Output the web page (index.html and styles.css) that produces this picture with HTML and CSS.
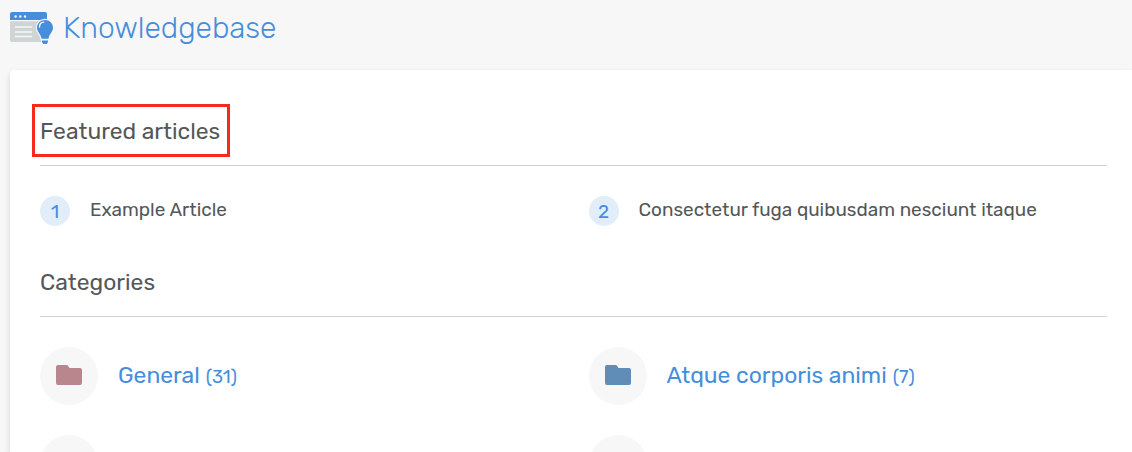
FILE: index.html
```
<!DOCTYPE html>
<html lang="en">
<head>
<meta charset="utf-8">
<title>Knowledgebase</title>
<link rel="stylesheet" href="styles.css">
</head>
<body>
<header class="page-header">
  <svg class="logo" width="44" height="34" viewBox="0 0 44 34">
    <path d="M0 9.200h37V28a2 2 0 0 1-2 2H2a2 2 0 0 1-2-2z" fill="#cfd4d5"/>
    <path d="M0 8V2a2 2 0 0 1 2-2h33a2 2 0 0 1 2 2v6z" fill="#468edb"/>
    <g fill="#f7f7f7"><circle cx="5.600" cy="4.500" r="1.200"/><circle cx="10.300" cy="4.500" r="1.200"/><circle cx="15" cy="4.500" r="1.200"/></g>
    <path d="M5.500 15h16M5.500 20h16M5.500 24.500h16" stroke="#f7f7f7" stroke-width="1.700" stroke-linecap="round"/>
    <path d="M35 8c-4.500 0-8 3.500-8 7.700 0 4.300 3.900 6 4.500 11h7c.6-5 4.500-6.700 4.500-11C43 11.500 39.500 8 35 8z" fill="#468edb" stroke="#f7f7f7" stroke-width="2.400" paint-order="stroke"/>
    <path d="M31 27h8v5h-8z" fill="#f7f7f7"/>
    <path d="M32 28.500h6v1.500l-1.200 2h-3.600L32 30z" fill="#468edb"/>
    <path d="M29.500 15c0-2.800 1.800-4.700 4.300-4.900" fill="none" stroke="#f7f7f7" stroke-width="1.400" stroke-linecap="round"/>
  </svg>
  <h1 class="page-title">Knowledgebase</h1>
</header>
<main class="panel">
  <h2 class="section-title">Featured articles<span class="highlight"></span></h2>
  <div class="grid articles">
    <div class="article"><span class="number">1</span><span class="article-name">Example Article</span></div>
    <div class="article"><span class="number">2</span><span class="article-name">Consectetur fuga quibusdam nesciunt itaque</span></div>
  </div>
  <h2 class="section-title">Categories</h2>
  <div class="grid categories">
    <div class="category">
      <span class="disc"><svg class="folder red" width="26" height="20" viewBox="0 0 26 20"><path d="M2 0h8.500q.8 0 1.300.6L13.500 3H24a2 2 0 0 1 2 2v13a2 2 0 0 1-2 2H2a2 2 0 0 1-2-2V2a2 2 0 0 1 2-2z"/></svg></span>
      <span class="category-name">General<small class="count">(31)</small></span>
    </div>
    <div class="category">
      <span class="disc"><svg class="folder blue" width="26" height="20" viewBox="0 0 26 20"><path d="M2 0h8.500q.8 0 1.300.6L13.500 3H24a2 2 0 0 1 2 2v13a2 2 0 0 1-2 2H2a2 2 0 0 1-2-2V2a2 2 0 0 1 2-2z"/></svg></span>
      <span class="category-name">Atque corporis animi<small class="count">(7)</small></span>
    </div>
    <div class="category"><span class="disc"></span></div>
    <div class="category"><span class="disc"></span></div>
  </div>
</main>
</body>
</html>
```
FILE: styles.css
```
* { box-sizing: border-box; }
body {
  margin: 0;
  height: 452px;
  overflow: hidden;
  background: #f7f7f7;
  color: #545758;
  font-family: Rubik, Roboto, sans-serif;
}
.page-header { display: flex; height: 70px; padding: 12px 0 0 10px; gap: 9px; }
.logo { flex: none; }
.page-title {
  margin: 0;
  color: #468edb;
  font-size: 30px;
  font-weight: 300;
  line-height: 32px;
  letter-spacing: -.03px;
}
.panel {
  height: 382px;
  overflow: hidden;
  margin-left: 10px;
  padding: 27px 25px 0 30px;
  background: #fff;
  border-radius: 4px 0 0 0;
  box-shadow: 0 3px 6px rgba(0, 0, 0, .14);
}
.section-title {
  position: relative;
  height: 69px;
  margin: 0;
  border-bottom: 1px solid #d0d2d3;
  font-size: 22.9px;
  font-weight: 400;
  line-height: 69px;
}
.highlight {
  position: absolute;
  left: -8px;
  top: 7px;
  width: 198px;
  height: 53px;
  border: 3px solid #f42b1c;
}
.grid { display: grid; grid-template-columns: 1fr 1fr; column-gap: 30px; }
.articles { height: 82px; padding-top: 30px; }
.article { display: flex; height: 30px; gap: 20px; }
.number {
  width: 30px;
  height: 30px;
  border-radius: 50%;
  background: #e1edf9;
  color: #468edb;
  font-size: 18.9px;
  line-height: 31px;
  text-align: center;
}
.article-name { font-size: 18.93px; line-height: 28px; white-space: nowrap; }
.categories { padding-top: 30px; row-gap: 30px; }
.category { display: flex; height: 58px; gap: 20px; }
.disc {
  display: flex;
  flex: none;
  align-items: center;
  justify-content: center;
  width: 58px;
  height: 58px;
  border-radius: 50%;
  background: #f7f7f7;
}
.folder { position: relative; top: -1px; }
.red { fill: #b9868e; }
.blue { fill: #608cb8; }
.category-name {
  display: flex;
  align-items: baseline;
  gap: 6px;
  color: #468edb;
  font-size: 22.9px;
  line-height: 57px;
  white-space: nowrap;
}
.count { font-size: 18.4px; }
```
